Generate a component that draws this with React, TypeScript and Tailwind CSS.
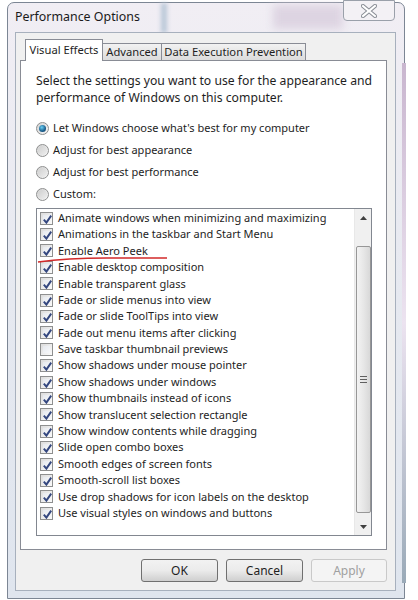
import React from "react";

const items: [string, boolean][] = [
  ["Animate windows when minimizing and maximizing", true],
  ["Animations in the taskbar and Start Menu", true],
  ["Enable Aero Peek", true],
  ["Enable desktop composition", true],
  ["Enable transparent glass", true],
  ["Fade or slide menus into view", true],
  ["Fade or slide ToolTips into view", true],
  ["Fade out menu items after clicking", true],
  ["Save taskbar thumbnail previews", false],
  ["Show shadows under mouse pointer", true],
  ["Show shadows under windows", true],
  ["Show thumbnails instead of icons", true],
  ["Show translucent selection rectangle", true],
  ["Show window contents while dragging", true],
  ["Slide open combo boxes", true],
  ["Smooth edges of screen fonts", true],
  ["Smooth-scroll list boxes", true],
  ["Use drop shadows for icon labels on the desktop", true],
  ["Use visual styles on windows and buttons", true],
];

const radios = [
  ["Let Windows choose what's best for my computer", true],
  ["Adjust for best appearance", false],
  ["Adjust for best performance", false],
  ["Custom:", false],
] as const;

function Check({ on }: { on: boolean }) {
  return (
    <div className="w-[13px] h-[13px] border border-[#8e8f8f] bg-gradient-to-br from-[#dcdcdc] to-[#fbfbfb] p-[2px] shrink-0">
      <div className="w-full h-full bg-gradient-to-br from-[#e6e9ee] to-[#f7f8fa] relative">
        {on && (
          <svg viewBox="0 0 9 9" className="absolute inset-0 w-[9px] h-[9px]">
            <path d="M0.8 4.6 L3.4 7.6 L8.2 0.6" fill="none" stroke="#34477f" strokeWidth="2" />
          </svg>
        )}
      </div>
    </div>
  );
}

function Radio({ on }: { on: boolean }) {
  return (
    <div className="w-[13px] h-[13px] rounded-full border border-[#8e8f8f] bg-gradient-to-br from-[#d4d4d4] to-[#f6f6f6] flex items-center justify-center shrink-0">
      {on ? (
        <div className="w-[7px] h-[7px] rounded-full bg-[radial-gradient(circle_at_40%_35%,#6ad0f5,#1a5d8c_60%,#0e3a5c)]" />
      ) : (
        <div className="w-[9px] h-[9px] rounded-full bg-gradient-to-br from-[#cfcfcf] to-[#eeeeee]" />
      )}
    </div>
  );
}

function Btn({ label, disabled }: { label: string; disabled?: boolean }) {
  return (
    <div
      className={
        disabled
          ? "w-[76px] h-[23px] rounded-[3px] border border-[#c9c9c9] bg-[#f4f4f4] text-[#a0a0a0] flex items-center justify-center"
          : "w-[77px] h-[23px] rounded-[3px] border border-[#707070] bg-gradient-to-b from-[#f2f2f2] via-[#ebebeb] to-[#cfcfcf] text-[#1e1e1e] flex items-center justify-center"
      }
    >
      {label}
    </div>
  );
}

export default function App() {
  return (
    <div
      className="w-[418px] h-[600px] bg-white relative overflow-hidden text-[11px] text-[#1e1e1e]"
      style={{ fontFamily: '"Noto Sans", "Open Sans", sans-serif' }}
    >
      <div className="ml-[7px] mt-[2px] w-[398px] h-[597px] border border-[#7c8694] rounded-t-[7px] bg-gradient-to-b from-[#f1eef4] via-[#e6e9f0] to-[#dfe5ee] flex flex-col relative">
        {/* blurred glass hints behind the title bar */}
        <div className="absolute left-[153px] top-0 w-[6px] h-[30px] bg-[#b9c8d8] blur-[2px]" />
        <div className="absolute left-[265px] top-[2px] w-[70px] h-[24px] bg-[#ddd4e2] blur-[4px]" />
        <div className="absolute right-[-2px] top-[60px] w-[4px] h-[520px] bg-gradient-to-b from-[#c9b6cf] via-[#ece3f0] to-[#9aaab8]" />

        {/* title bar */}
        <div className="h-[29px] flex items-center pl-[7px] text-[12.4px] text-[#1a1a1a] shrink-0 relative">
          Performance Options
        </div>
        <div className="absolute right-[9px] top-[-3px] w-[52px] h-[21px] border border-[#9aa0aa] rounded-b-[4px] bg-[#f3f1f5] flex items-center justify-center">
          <svg viewBox="0 0 16 14" className="w-[16px] h-[14px]">
            <path d="M2 2 L14 12 M14 2 L2 12" stroke="#8a8e96" strokeWidth="4.2" strokeLinecap="square" />
            <path d="M2 2 L14 12 M14 2 L2 12" stroke="#ffffff" strokeWidth="2" strokeLinecap="square" />
          </svg>
        </div>

        {/* client area */}
        <div className="ml-[7px] mr-[8px] mb-[7px] flex-1 border border-[#a7b0bd] bg-[#f0f0f0] pt-[6px] flex flex-col relative">
          {/* tabs */}
          <div className="flex items-end ml-[9px] h-[22px] -mb-[1px] relative z-10 whitespace-nowrap text-[11.2px]">
            <div className="w-[78px] h-[22px] bg-white border border-[#898c95] border-b-0 flex items-center justify-center pb-[1px]">
              Visual Effects
            </div>
            <div className="w-[59px] h-[18px] bg-gradient-to-b from-[#f2f2f2] to-[#dcdcdc] border border-[#898c95] border-l-0 flex items-center justify-center">
              Advanced
            </div>
            <div className="w-[144px] h-[18px] bg-gradient-to-b from-[#f2f2f2] to-[#dcdcdc] border border-[#898c95] border-l-0 flex items-center justify-center">
              Data Execution Prevention
            </div>
          </div>

          {/* panel */}
          <div className="ml-[4px] w-[367px] h-[490px] border border-[#898c95] bg-white pt-[11px] pl-[15px] flex flex-col">
            <div className="leading-[17px] text-[12.2px] whitespace-nowrap">
              Select the settings you want to use for the appearance and
              <br />
              performance of Windows on this computer.
            </div>
            <div className="mt-[11px] flex flex-col">
              {radios.map(([label, on]) => (
                <div key={label} className="h-[22px] flex items-center gap-[4px]">
                  <Radio on={on} />
                  <span>{label}</span>
                </div>
              ))}
            </div>

            {/* list box */}
            <div className="mt-[3px] w-[336px] h-[328px] border border-[#828790] flex relative">
              <div className="flex-1 pt-[1px] pl-[3px]">
                {items.map(([label, on]) => (
                  <div key={label} className="h-[16.4px] flex items-center gap-[5px] whitespace-nowrap">
                    <Check on={on} />
                    <span>{label}</span>
                  </div>
                ))}
              </div>
              {/* scrollbar */}
              <div className="w-[17px] bg-[#f0f0f0] flex flex-col items-center border-l border-[#e8e8e8]">
                <div className="h-[17px] w-full flex items-center justify-center">
                  <svg viewBox="0 0 7 4" className="w-[7px] h-[4px]">
                    <path d="M0 4 L3.5 0 L7 4 Z" fill="#404040" />
                  </svg>
                </div>
                <div className="h-[20px]" />
                <div className="w-[15px] h-[267px] rounded-[2px] border border-[#979797] bg-gradient-to-r from-[#f3f3f3] via-[#e7e7e7] to-[#d8d8d8] flex flex-col items-center justify-center gap-[2px]">
                  <div className="w-[7px] h-[1px] bg-[#606060]" />
                  <div className="w-[7px] h-[1px] bg-[#606060]" />
                  <div className="w-[7px] h-[1px] bg-[#606060]" />
                </div>
                <div className="flex-1" />
                <div className="h-[17px] w-full flex items-center justify-center">
                  <svg viewBox="0 0 7 4" className="w-[7px] h-[4px]">
                    <path d="M0 0 L7 0 L3.5 4 Z" fill="#404040" />
                  </svg>
                </div>
              </div>
              {/* red pen underline */}
              <svg className="absolute left-[0px] top-[46px] w-[132px] h-[10px]" viewBox="0 0 132 10">
                <path d="M1 7 Q 30 3 70 3 T 130 3" fill="none" stroke="#d22a2a" strokeWidth="1.6" />
              </svg>
            </div>
          </div>

          {/* buttons */}
          <div className="mt-[9px] flex justify-end gap-[8px] pr-[8px] text-[12px]">
            <Btn label="OK" />
            <Btn label="Cancel" />
            <Btn label="Apply" disabled />
          </div>
        </div>
      </div>
    </div>
  );
}
